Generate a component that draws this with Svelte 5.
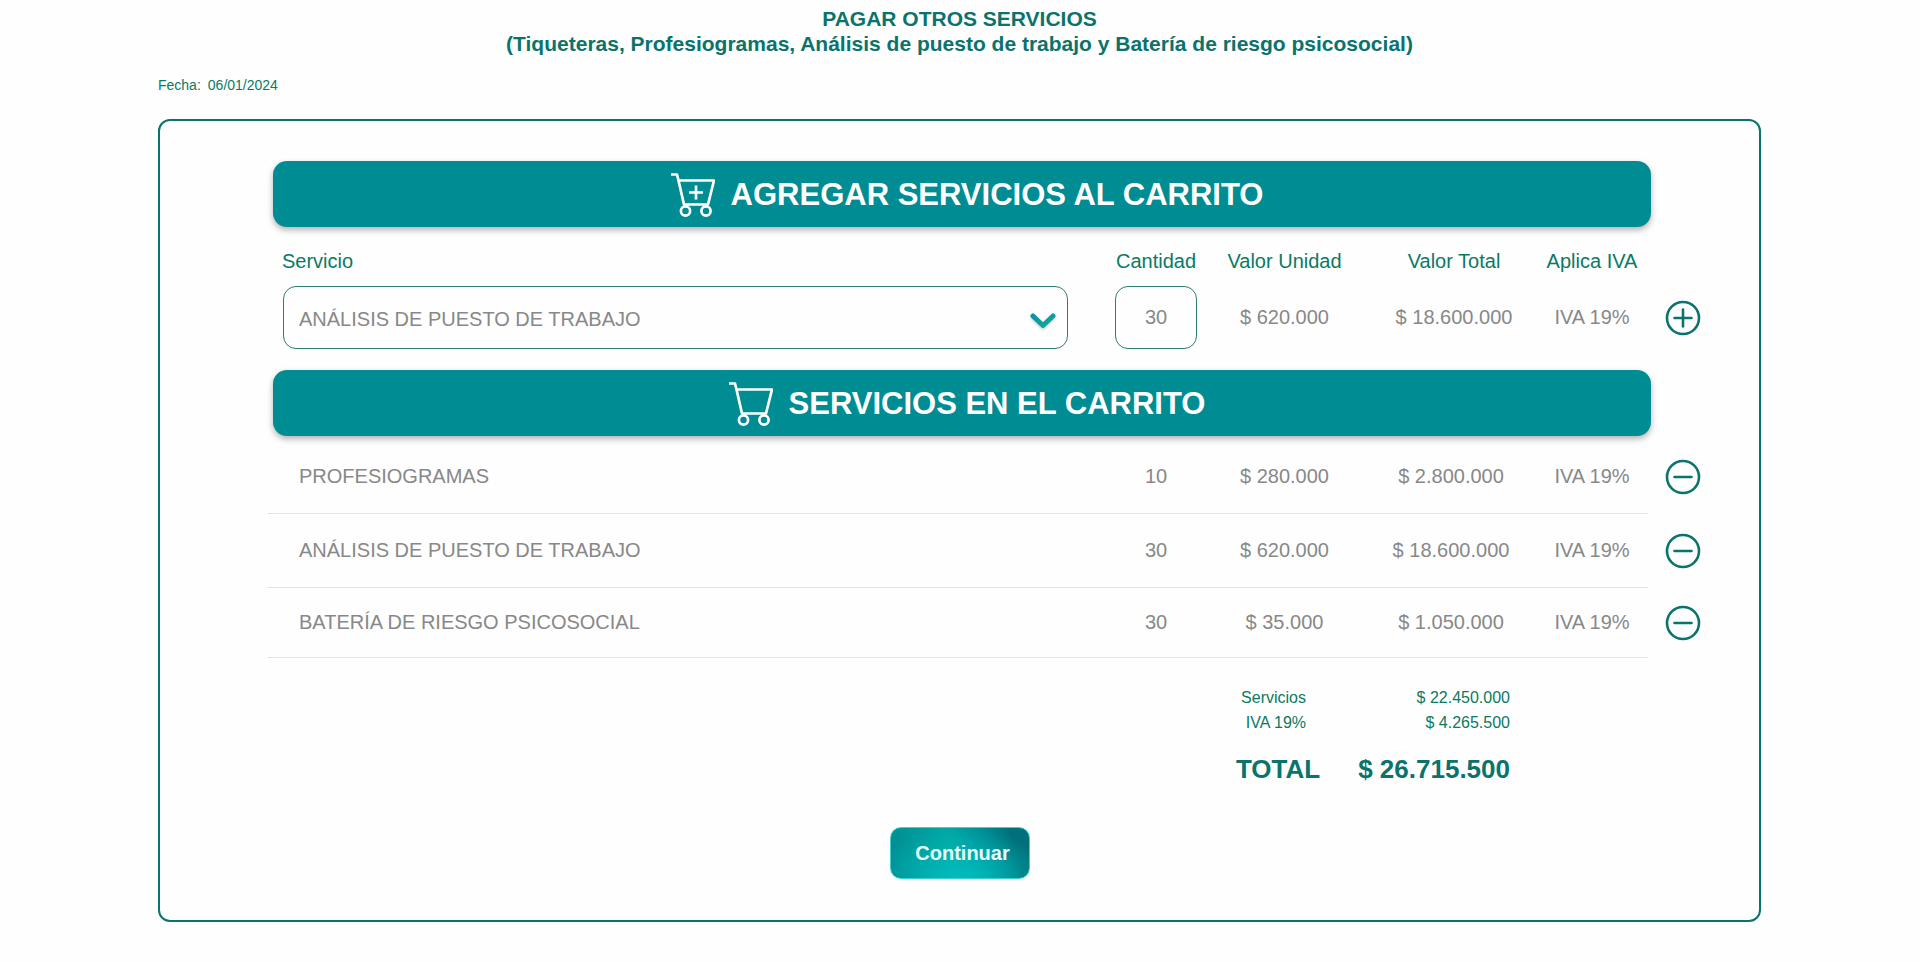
<script lang="ts">
  type Service = { name: string; price: number };
  type Item = { service: Service; quantity: number };

  const services: Service[] = [
    { name: 'PROFESIOGRAMAS', price: 280000 },
    { name: 'ANÁLISIS DE PUESTO DE TRABAJO', price: 620000 },
    { name: 'BATERÍA DE RIESGO PSICOSOCIAL', price: 35000 }
  ];

  let selected = $state(1);
  let quantity = $state('30');
  let items: Item[] = $state([
    { service: services[0], quantity: 10 },
    { service: services[1], quantity: 30 },
    { service: services[2], quantity: 30 }
  ]);

  let current = $derived(services[selected]);
  let subtotal = $derived(items.reduce((sum, i) => sum + i.service.price * i.quantity, 0));
  let iva = $derived(Math.round(subtotal * 0.19));

  function money(value: number) {
    return '$ ' + value.toLocaleString('es-CO');
  }

  function add(e: Event) {
    e.preventDefault();
    const n = Number(quantity);
    if (n > 0) items.push({ service: current, quantity: n });
  }

  function remove(index: number) {
    items.splice(index, 1);
  }
</script>

{#snippet cart(plus: boolean)}
  <svg class="cart-icon" viewBox="0 0 44 44" aria-hidden="true">
    <path d="M0 1.500h6l1.500 6L13 31.500h24L43 7.500H7.500" />
    <circle cx="14.500" cy="38" r="4.600" />
    <circle cx="35" cy="38" r="4.600" />
    {#if plus}
      <path d="M25 12.500v14M18 19.500h14" />
    {/if}
  </svg>
{/snippet}

<main>
  <h1>
    PAGAR OTROS SERVICIOS
    <small>(Tiqueteras, Profesiogramas, Análisis de puesto de trabajo y Batería de riesgo psicosocial)</small>
  </h1>

  <p class="date"><span>Fecha:</span><time datetime="2024-01-06">06/01/2024</time></p>

  <section class="panel">
    <h2>{@render cart(true)}AGREGAR SERVICIOS AL CARRITO</h2>

    <form onsubmit={add}>
      <label class="service" for="service">Servicio</label>
      <label for="quantity">Cantidad</label>
      <span class="label">Valor Unidad</span>
      <span class="label">Valor Total</span>
      <span class="label">Aplica IVA</span>
      <span></span>

      <div class="select">
        <select id="service" bind:value={selected}>
          {#each services as service, i}
            <option value={i}>{service.name}</option>
          {/each}
        </select>
        <svg viewBox="0 0 26 16" aria-hidden="true">
          <defs>
            <linearGradient id="chevron" x1="0" x2="1" y1="0" y2="1">
              <stop offset="0" stop-color="#0a94a4" />
              <stop offset="1" stop-color="#12a89c" />
            </linearGradient>
          </defs>
          <path d="M3 3l10 9.500L23 3" stroke="url(#chevron)" />
        </svg>
      </div>
      <input id="quantity" type="text" inputmode="numeric" bind:value={quantity} />
      <span>{money(current.price)}</span>
      <span>{money(current.price * Number(quantity))}</span>
      <span>IVA 19%</span>
      <button class="round" type="submit" aria-label="Agregar">
        <svg viewBox="0 0 36 36" aria-hidden="true">
          <circle cx="18" cy="18" r="16" />
          <path d="M18 9.500v17M9.500 18h17" />
        </svg>
      </button>
    </form>

    <h2>{@render cart(false)}SERVICIOS EN EL CARRITO</h2>

    <table>
      <colgroup>
        <col />
        <col class="c-quantity" />
        <col class="c-unit" />
        <col class="c-total" />
        <col class="c-iva" />
        <col class="c-action" />
      </colgroup>
      <tbody>
        {#each items as item, i}
          <tr>
            <td class="name">{item.service.name}</td>
            <td>{item.quantity}</td>
            <td>{money(item.service.price)}</td>
            <td class="total">{money(item.service.price * item.quantity)}</td>
            <td>IVA 19%</td>
            <td class="action">
              <button class="round" type="button" aria-label="Quitar" onclick={() => remove(i)}>
                <svg viewBox="0 0 36 36" aria-hidden="true">
                  <circle cx="18" cy="18" r="16" />
                  <path d="M9.500 18h17" />
                </svg>
              </button>
            </td>
          </tr>
        {/each}
      </tbody>
    </table>

    <dl>
      <div><dt>Servicios</dt><dd>{money(subtotal)}</dd></div>
      <div><dt>IVA 19%</dt><dd>{money(iva)}</dd></div>
      <div class="grand"><dt>TOTAL</dt><dd>{money(subtotal + iva)}</dd></div>
    </dl>

    <button class="continue" type="button">Continuar</button>
  </section>
</main>

<style>
  :global(body) { background: #fefefe; }
  main {
    padding: 6px 159px 40px 158px;
    font-family: "Liberation Sans", Arial, sans-serif;
    font-size: 20px;
    color: #888;
  }
  h1 {
    margin: 0;
    font-size: 21px;
    line-height: 25px;
    text-align: center;
    color: #0a736b;
  }
  h1 small { display: block; font-size: 21px; }
  .date {
    display: flex;
    gap: 7px;
    margin: 20px 0 25px;
    font-size: 14px;
    line-height: 18px;
    color: #0a7a63;
  }
  .panel {
    display: flex;
    flex-direction: column;
    padding: 40px 41px 41px 108px;
    border: 2px solid #0a736b;
    border-radius: 12px;
  }
  h2 {
    display: flex;
    align-items: center;
    justify-content: center;
    gap: 16px;
    height: 66px;
    margin: 0 67px 0 5px;
    padding: 2px 0 0 10px;
    border-radius: 14px;
    box-shadow: 0 3px 6px rgba(0, 0, 0, 0.3);
    background: #008c93;
    color: #fff;
    font-size: 31px;
    box-sizing: border-box;
  }
  .cart-icon {
    width: 44px;
    height: 44px;
    fill: none;
    stroke: #fff;
    stroke-width: 2.7;
    stroke-linejoin: round;
  }

  form {
    display: grid;
    grid-template-columns: 1fr 82px 175px 164px 112px 70px;
    row-gap: 12px;
    align-items: center;
    justify-items: center;
    padding: 21px 0 21px;
    white-space: nowrap;
  }
  label, .label { line-height: 26px; color: #0a7a63; }
  .service { justify-self: start; padding-left: 14px; }
  .select {
    position: relative;
    justify-self: stretch;
    margin: 0 47px 0 15px;
  }
  select, input {
    width: 100%;
    height: 63px;
    box-sizing: border-box;
    border: 1px solid #2a7f6c;
    border-radius: 13px;
    background: transparent;
    color: inherit;
    font: inherit;
  }
  select { appearance: none; padding: 2px 56px 0 15px; }
  input { padding: 0; text-align: center; }
  .select svg {
    position: absolute;
    right: 12px;
    top: 27px;
    width: 26px;
    height: 16px;
    fill: none;
    stroke-width: 5;
    stroke-linecap: round;
    stroke-linejoin: round;
    filter: drop-shadow(0 2px 1px rgba(0, 0, 0, 0.15));
    pointer-events: none;
  }
  .round {
    display: block;
    margin: 0 auto;
    padding: 0;
    border: none;
    background: none;
    cursor: pointer;
  }
  .round svg {
    display: block;
    width: 36px;
    height: 36px;
    fill: none;
    stroke: #0a736b;
    stroke-width: 2.6;
    stroke-linecap: round;
  }

  table {
    width: 100%;
    margin-top: 4px;
    border-collapse: separate;
    border-spacing: 0;
    table-layout: fixed;
  }
  .c-quantity { width: 82px; }
  .c-unit { width: 175px; }
  .c-total { width: 164px; }
  .c-iva { width: 112px; }
  .c-action { width: 70px; }
  td {
    height: 74px;
    box-sizing: border-box;
    padding: 0;
    border-bottom: 1px solid #e2e2e2;
    text-align: center;
  }
  tr:last-child td { height: 70px; }
  td.name { padding-left: 31px; text-align: left; }
  td.total { padding-right: 6px; }
  td.action { border-bottom: none; }

  dl {
    margin: 27px 208px 42px 0;
    font-size: 16px;
    line-height: 25px;
    color: #0a7a63;
  }
  dl div { display: flex; justify-content: flex-end; }
  dd { width: 204px; margin: 0; text-align: right; }
  .grand {
    gap: 38px;
    margin-top: 18px;
    font-size: 26px;
    font-weight: bold;
    line-height: 32px;
    color: #0a736b;
  }
  .grand dd { width: auto; }

  .continue {
    align-self: center;
    width: 140px;
    height: 52px;
    margin-right: 66px;
    padding: 0 0 0 5px;
    border: 1px solid #3fd0d0;
    border-radius: 11px;
    background:
      radial-gradient(ellipse 90px 50px at 50% 100%, #00bcbc, transparent),
      linear-gradient(75deg, #008a90 0%, #00a8a4 45%, #00939a 65%, #00707a 88%);
    color: #e6ffff;
    font: bold 20px "Liberation Sans", Arial, sans-serif;
    cursor: pointer;
  }
</style>
